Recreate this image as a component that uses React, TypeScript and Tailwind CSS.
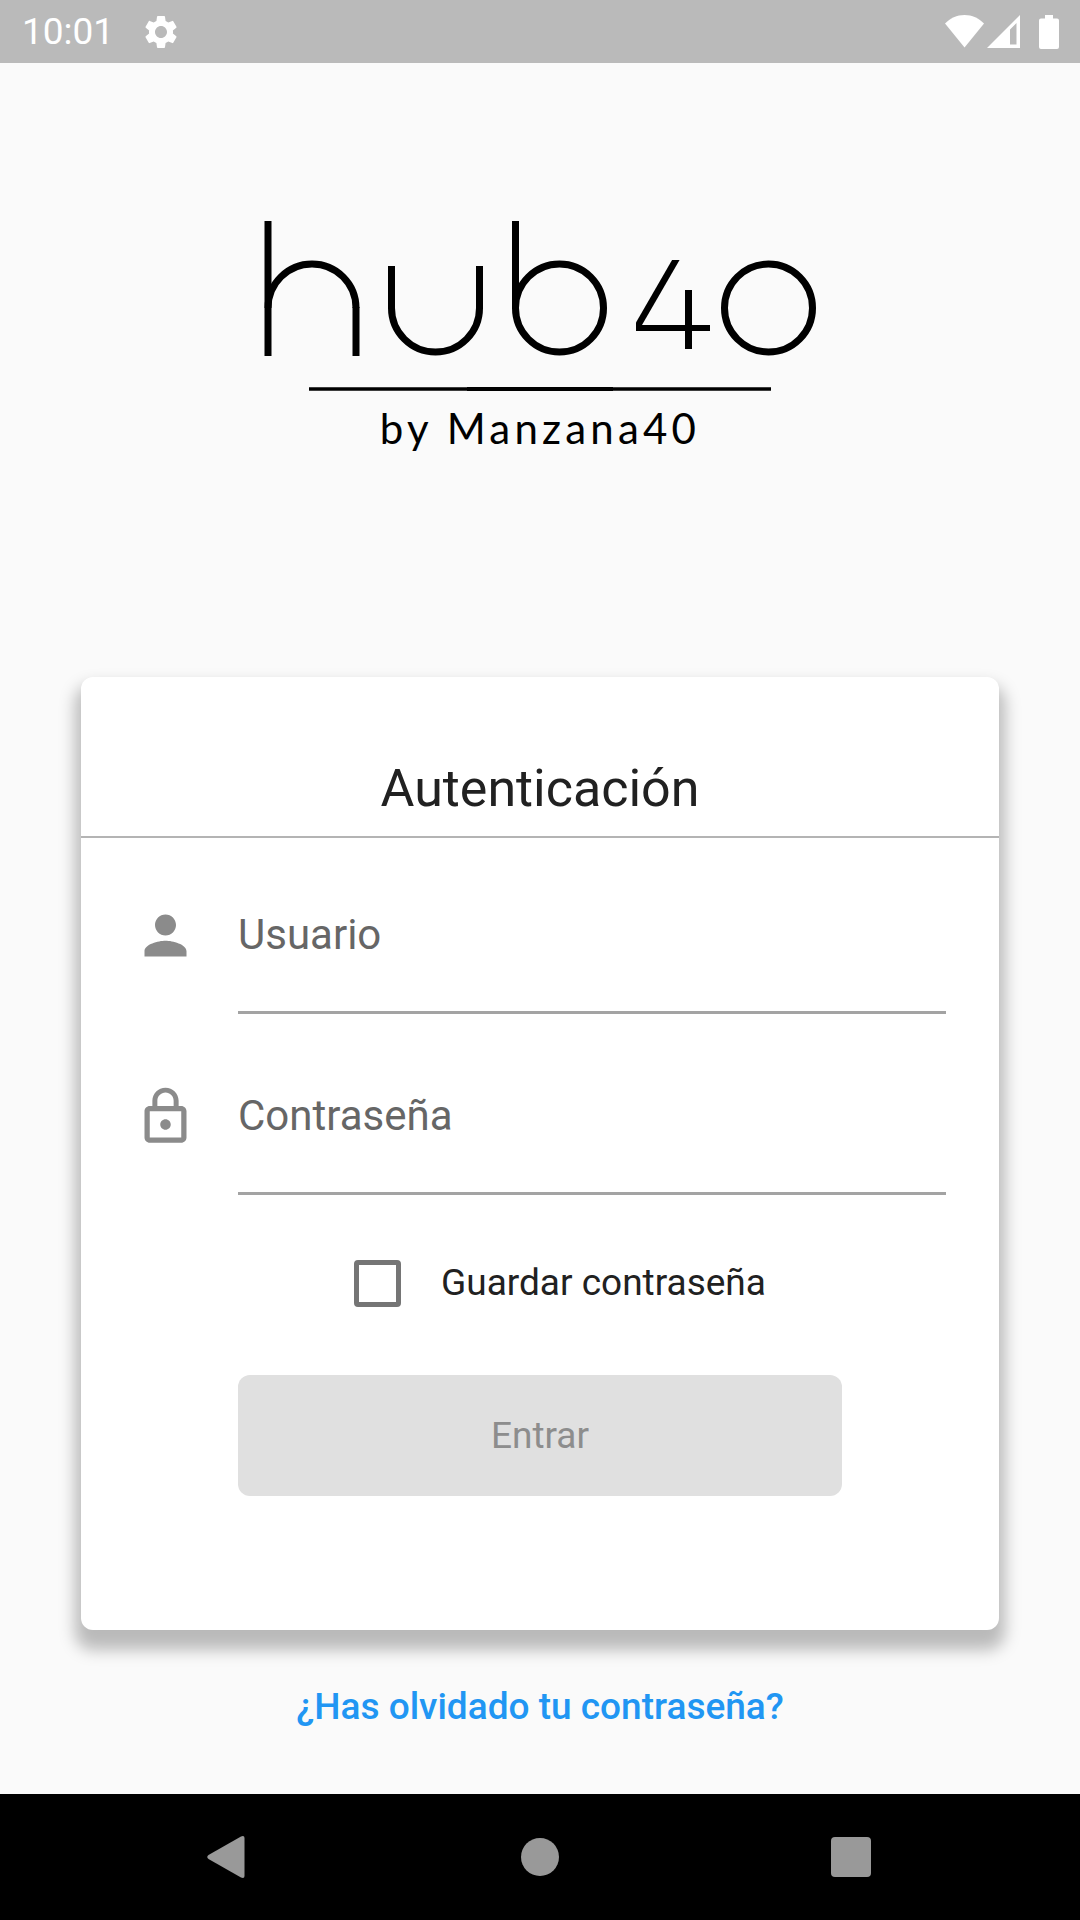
import { useState } from "react";
import { MdLockOutline, MdPerson, MdSettings } from "react-icons/md";

const StatusBar: React.FC = () => {
  return (
    <header className="flex h-[63px] items-center bg-[#bababa] pl-[22px] pr-[21px] text-white">
      <span className="text-[37px] leading-[44px]">10:01</span>
      <MdSettings className="ml-[27px] size-10" />
      <div className="ml-auto flex items-center">
        {/* Wifi */}
        <svg viewBox="0 0 39 33" className="h-[33px] w-[39px]" fill="currentColor">
          <path d="M19.5 32.5 0 8.6C5 3.4 12 0 19.5 0S34 3.4 39 8.6Z" />
        </svg>
        {/* Mobile signal */}
        <svg viewBox="0 0 33 33" className="ml-[3px] size-[33px]" fill="currentColor">
          <path fillRule="evenodd" d="M0 33 33 0v33ZM23 14.5V29.5h6.5V8Z" />
        </svg>
        {/* Battery */}
        <svg viewBox="0 0 20 34" className="ml-[19px] h-[34px] w-5" fill="currentColor">
          <path d="M6 0h8v3.5h4a2 2 0 0 1 2 2V32a2 2 0 0 1-2 2H2a2 2 0 0 1-2-2V5.5a2 2 0 0 1 2-2h4Z" />
        </svg>
      </div>
    </header>
  );
};

const Logo: React.FC = () => {
  return (
    <div className="flex flex-col items-center">
      <svg
        viewBox="0 0 552 171"
        className="w-[552px] max-w-full"
        role="img"
        aria-label="hub40"
        fill="none"
        stroke="#000"
        strokeWidth="7"
      >
        <clipPath id="four">
          <rect x="372" y="39" width="74" height="90" />
        </clipPath>
        {/* h */}
        <line x1="4" y1="0" x2="4" y2="135" />
        <circle cx="48" cy="87" r="44" pathLength="2" strokeDasharray="1 1" transform="rotate(180 48 87)" />
        <line x1="92" y1="86" x2="92" y2="135" />
        {/* u */}
        <line x1="127.5" y1="45" x2="127.5" y2="88" />
        <circle cx="171.5" cy="87" r="44" pathLength="2" strokeDasharray="1 1" />
        <line x1="215.5" y1="45" x2="215.5" y2="88" />
        {/* b */}
        <line x1="251.5" y1="0" x2="251.5" y2="88" />
        <circle cx="295.5" cy="87" r="44" />
        {/* 4 */}
        <g clipPath="url(#four)">
          <line x1="417" y1="30" x2="372" y2="108" strokeWidth="6.5" />
          <line x1="372" y1="107" x2="446" y2="107" strokeWidth="6" />
          <line x1="424.5" y1="69" x2="424.5" y2="128" />
        </g>
        {/* 0 */}
        <circle cx="504.5" cy="87" r="44" />
        {/* Underline, slightly heavier in the middle */}
        <line x1="45" y1="168" x2="507" y2="168" strokeWidth="3.4" />
        <line x1="203" y1="168" x2="349" y2="168" strokeWidth="3.8" />
      </svg>
      <p className="mt-[6px] font-['Lato',sans-serif] text-[42px] leading-[60px] tracking-widest text-black">
        by Manzana40
      </p>
    </div>
  );
};

interface FieldProps {
  id: string;
  type: string;
  label: string;
  icon: React.ReactNode;
  value: string;
  onChange: (value: string) => void;
}

const Field: React.FC<FieldProps> = ({ id, type, label, icon, value, onChange }) => {
  return (
    <div className="flex items-start gap-[41px]">
      <label htmlFor={id} aria-label={label} className="mt-3 shrink-0 text-[63px] text-[#8b8b8b]">
        {icon}
      </label>
      <input
        id={id}
        name={id}
        type={type}
        value={value}
        placeholder={label}
        aria-label={label}
        onChange={(e) => onChange(e.target.value)}
        className="min-w-0 flex-1 border-b-[3px] border-[#a3a3a3] pb-[51px] pt-[18px] text-[42px] leading-[50px] text-[#212121] outline-none placeholder:text-[#666666]"
      />
    </div>
  );
};

const LoginCard: React.FC = () => {
  const [user, setUser] = useState("");
  const [password, setPassword] = useState("");
  const [remember, setRemember] = useState(false);

  return (
    <section className="mx-auto w-[85%] rounded-xl bg-white shadow-[0_14px_16px_6px_rgba(0,0,0,0.26)]">
      <h1 className="border-b-2 border-[#b4b4b4] pb-[15px] pt-20 text-center text-[52px] leading-[64px] text-[#212121]">
        Autenticación
      </h1>
      <form
        onSubmit={(e) => e.preventDefault()}
        className="flex flex-col px-[53px] pb-[134px] pt-[54px]"
      >
        <div className="flex flex-col gap-[59px]">
          <Field
            id="usuario"
            type="text"
            label="Usuario"
            icon={<MdPerson />}
            value={user}
            onChange={setUser}
          />
          <Field
            id="contrasena"
            type="password"
            label="Contraseña"
            icon={<MdLockOutline />}
            value={password}
            onChange={setPassword}
          />
        </div>

        <div className="mt-14 flex h-16 items-center justify-center">
          <input
            id="guardar"
            type="checkbox"
            checked={remember}
            onChange={(e) => setRemember(e.target.checked)}
            className="mx-10 size-[47px] shrink-0 appearance-none rounded-[4px] border-[5px] border-[#757575] checked:bg-[#757575]"
          />
          <label htmlFor="guardar" className="text-[37px] leading-[48px] text-[#212121]">
            Guardar contraseña
          </label>
        </div>

        <button
          type="submit"
          disabled={!user || !password}
          className="mx-[104px] mt-[60px] h-[121px] rounded-xl bg-[#2196f3] text-[37px] leading-[48px] text-white disabled:bg-[#e0e0e0] disabled:text-[#8d8d8d]"
        >
          Entrar
        </button>
      </form>
    </section>
  );
};

const NavBar: React.FC = () => {
  return (
    <nav className="mt-auto flex h-[126px] justify-evenly bg-black text-[#999999]">
      <button aria-label="Atrás" className="flex w-[164px] items-center justify-center">
        <svg viewBox="0 0 44 44" className="size-11" fill="currentColor">
          <path d="M1.5 20 34 1.4Q37.5 0 37.5 3V41Q37.5 44 34 42.6L1.5 24Q-1 22 1.5 20Z" />
        </svg>
      </button>
      <button aria-label="Inicio" className="flex w-[164px] items-center justify-center">
        <span className="size-[38px] rounded-full bg-[#999999]" />
      </button>
      <button aria-label="Recientes" className="flex w-[164px] items-center justify-center">
        <span className="size-10 rounded-[4px] bg-[#999999]" />
      </button>
    </nav>
  );
};

const App: React.FC = () => {
  return (
    <div className="flex min-h-screen flex-col bg-[#fafafa] font-['Roboto',sans-serif]">
      <StatusBar />
      <main className="flex flex-col pt-[158px]">
        <Logo />
        <div className="mt-[219px]">
          <LoginCard />
        </div>
        <a
          href="#"
          className="mx-auto mt-[53px] text-[37px] font-medium leading-[48px] text-[#2196f3]"
        >
          ¿Has olvidado tu contraseña?
        </a>
      </main>
      <NavBar />
    </div>
  );
};

export default App;
